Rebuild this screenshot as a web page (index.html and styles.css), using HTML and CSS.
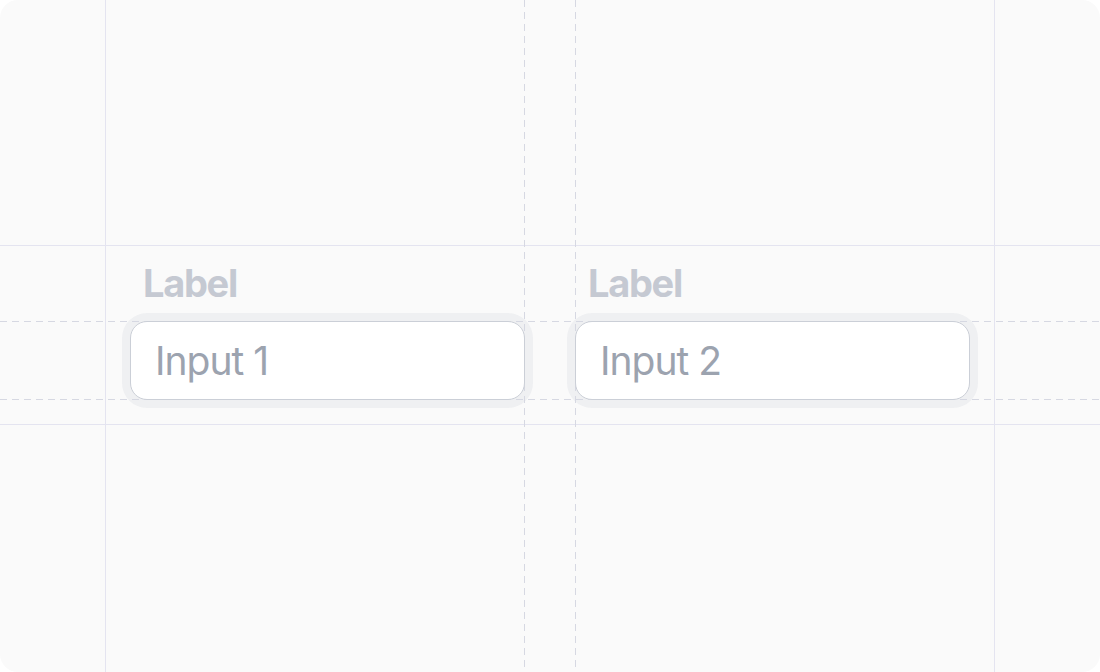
FILE: index.html
```html
<!DOCTYPE html>
<html lang="en">
<head>
<meta charset="utf-8">
<title>Inputs</title>
<link rel="stylesheet" href="styles.css">
</head>
<body>
<div class="canvas">
  <div class="guide v solid g-v1"></div>
  <div class="guide v solid g-v2"></div>
  <div class="guide h solid g-h1"></div>
  <div class="guide h solid g-h2"></div>
  <div class="guide v dashed g-v3"></div>
  <div class="guide v dashed g-v4"></div>
  <div class="guide h dashed g-h3"></div>
  <div class="guide h dashed g-h4"></div>

  <div class="row">
    <div class="field">
      <div class="label">Label</div>
      <div class="ring"><div class="input">Input 1</div></div>
    </div>
    <div class="field">
      <div class="label">Label</div>
      <div class="ring"><div class="input">Input 2</div></div>
    </div>
  </div>
</div>
</body>
</html>
```
FILE: styles.css
```css
html, body {
  margin: 0;
  padding: 0;
  background: #ffffff;
}
body {
  font-family: Inter, "Noto Sans", sans-serif;
}
.canvas {
  position: relative;
  width: 1100px;
  height: 672px;
  background: #fafafa;
  border-radius: 18px;
  overflow: hidden;
}
.guide {
  position: absolute;
  z-index: 1;
}
.guide.v {
  top: 0;
  bottom: 0;
  width: 1px;
}
.guide.h {
  left: 0;
  right: 0;
  height: 1px;
}
.guide.v.solid, .guide.h.solid {
  background: #e4e4f0;
}
.guide.v.dashed {
  background: repeating-linear-gradient(to bottom, #d6d8e2 0 7px, transparent 7px 12px);
}
.guide.h.dashed {
  background: repeating-linear-gradient(to right, #d6d8e2 0 7px, transparent 7px 12px);
}
.g-v1 { left: 105px; }
.g-v2 { left: 994px; }
.g-h1 { top: 245px; }
.g-h2 { top: 424px; }
.g-v3 { left: 524px; }
.g-v4 { left: 575px; }
.g-h3 { top: 321px; }
.g-h4 { top: 399px; }

.row {
  display: flex;
  gap: 34px;
  padding: 260px 0 0 122px;
}
.field {
  display: flex;
  flex-direction: column;
}
.label {
  font-size: 38px;
  line-height: 46px;
  font-weight: 700;
  letter-spacing: -1.3px;
  color: #c5c9d2;
  padding-left: 21px;
  margin-bottom: 7px;
}
.ring {
  padding: 8px;
  background: #eff0f2;
  border-radius: 25px;
}
.input {
  position: relative;
  z-index: 2;
  box-sizing: border-box;
  width: 395px;
  height: 79px;
  background: #ffffff;
  border: 1px solid #cbcfd7;
  border-radius: 17px;
  display: flex;
  align-items: center;
  padding-left: 24px;
  font-size: 39px;
  letter-spacing: -1px;
  color: #9ca3af;
}
```
